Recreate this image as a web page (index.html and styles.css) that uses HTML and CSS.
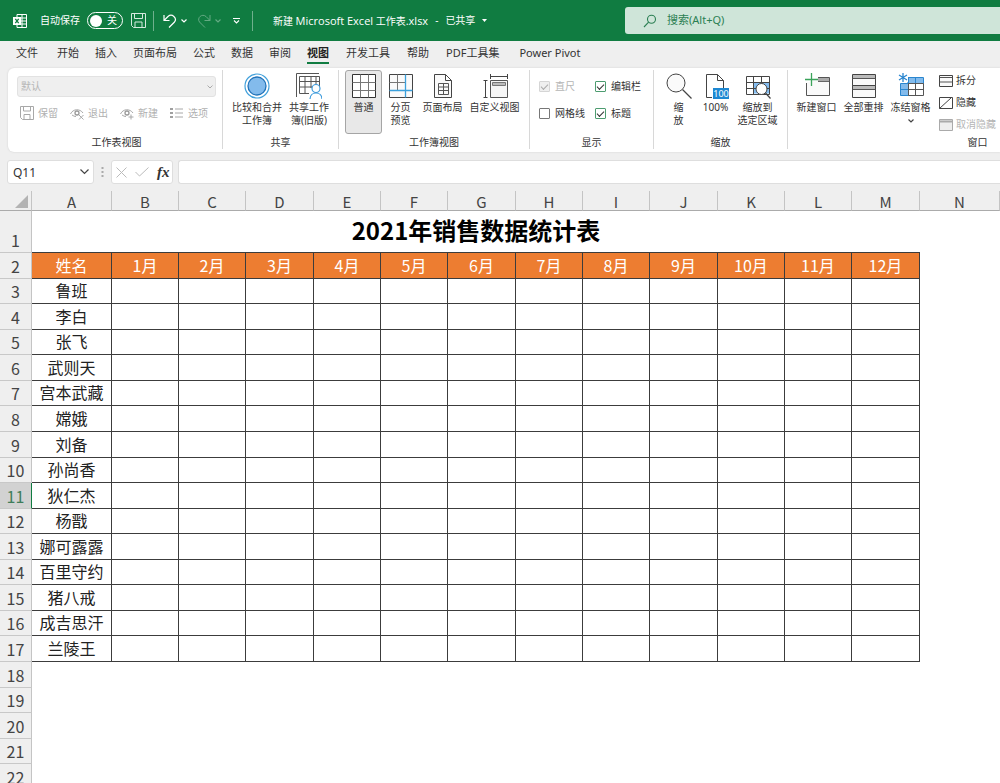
FILE: index.html
```html
<!DOCTYPE html>
<html lang="zh-CN">
<head>
<meta charset="utf-8">
<meta name="viewport" content="width=device-width, initial-scale=1">
<title>新建 Microsoft Excel 工作表.xlsx</title>
<link rel="stylesheet" href="styles.css">
</head>
<body>
<header class="titlebar">
  <div class="titlebar-left">
    <svg class="app-icon" width="14" height="14" viewBox="0 0 14 14" aria-hidden="true"><path d="M4 .5h9.500v13H4zM4 4h9.500M4 7h9.500M4 10h9.500M9 .5v13" fill="none" stroke="#fff"/><path d="M0 3h8v8H0z" fill="#fff"/><path d="M2.300 4.800l3.400 4.400M5.700 4.800L2.300 9.200" stroke="#107c41" stroke-width="1.300"/></svg>
    <label class="autosave" for="autosave">自动保存</label>
    <span class="switch"><input type="checkbox" id="autosave" role="switch"><span class="knob"></span><span>关</span></span>
    <button class="tb-btn save" aria-label="保存"><svg width="15" height="15" viewBox="0 0 15 15"><path d="M.5.5h14v14h-12l-2-2zM3.500.5v5h8v-5M4 14.500V9h7v5.500" fill="none" stroke="#d5eadf"/></svg></button>
    <span class="tb-sep"></span>
    <button class="tb-btn undo" aria-label="撤消"><svg width="14" height="14" viewBox="0 0 14 14"><path d="M1 1v5.500h5.500M1 6.500L5 2.500C9-1 14.500 4 11.500 8L6 13.500" fill="none" stroke="#fff" stroke-width="1.200"/></svg><svg width="6" height="4" viewBox="0 0 6 4"><path d="M.5.5L3 3 5.500.5" fill="none" stroke="#fff" stroke-width="1.200"/></svg></button>
    <button class="tb-btn redo" aria-label="恢复" disabled><svg width="14" height="14" viewBox="0 0 14 14"><path d="M13 1v5.500H7.500M13 6.500L9 2.500C5-1-.5 4 2.500 8L8 13.500" fill="none" stroke="#fff"/></svg><svg width="6" height="4" viewBox="0 0 6 4"><path d="M.5.5L3 3 5.500.5" fill="none" stroke="#fff" stroke-width="1.200"/></svg></button>
    <button class="tb-btn qat" aria-label="自定义快速访问工具栏"><svg width="7" height="6" viewBox="0 0 7 6"><path d="M0 .5h7M1 2.500L3.500 5 6 2.500" fill="none" stroke="#fff" stroke-width="1.100"/></svg></button>
    <span class="tb-sep"></span>
    <button class="doc-title"><span>新建 <span class="latin">Microsoft Excel</span> 工作表<span class="latin">.xlsx</span></span><span>-</span><span>已共享</span><svg width="5" height="3" viewBox="0 0 5 3"><path d="M0 0h5L2.500 3z" fill="#fff"/></svg></button>
  </div>
  <div class="search">
    <svg width="14" height="14" viewBox="0 0 14 14" aria-hidden="true"><circle cx="8.500" cy="5.200" r="4" fill="none" stroke="#2b7f53" stroke-width="1.100"/><path d="M5.600 8.200L1 13" stroke="#2b7f53" stroke-width="1.100"/></svg>
    <input type="text" placeholder="搜索(Alt+Q)" aria-label="搜索">
  </div>
</header>

<nav class="tabs">
  <a href="#">文件</a><a href="#">开始</a><a href="#">插入</a><a href="#">页面布局</a><a href="#">公式</a><a href="#">数据</a><a href="#">审阅</a><a href="#" class="active">视图</a><a href="#">开发工具</a><a href="#">帮助</a><a href="#">PDF工具集</a><a href="#" class="pivot">Power Pivot</a>
</nav>

<section class="ribbon">
  <div class="group g-views">
    <div class="group-body">
      <div class="select-wrap">
        <select disabled aria-label="工作表视图"><option>默认</option></select>
        <svg width="6" height="4" viewBox="0 0 6 4"><path d="M.5.5L3 3 5.500.5" fill="none" stroke="#aaa"/></svg>
      </div>
      <div class="view-actions">
        <button disabled><svg width="14" height="14" viewBox="0 0 14 14"><path d="M.5.5h13v13H2.500l-2-2zM3.500.5v4.500h7V.5M4 13.500V8.500h6v5" fill="none" stroke="#a8a8a8"/></svg>保留</button>
        <button disabled><svg width="14" height="14" viewBox="0 0 14 14"><path d="M.5 8C3 2.500 10 2.500 13 7M2 9c1 1 3 1.500 4 1.500" fill="none" stroke="#a8a8a8"/><circle cx="7" cy="7" r="2" fill="none" stroke="#999" stroke-width="1.300"/><path d="M9 9l4.500 4.500M13.500 9L9 13.500" stroke="#a8a8a8"/></svg>退出</button>
        <button disabled><svg width="14" height="14" viewBox="0 0 14 14"><path d="M.5 8C3 2.500 10 2.500 13 7M2 9c1 1 3 1.500 4 1.500" fill="none" stroke="#a8a8a8"/><circle cx="7" cy="7" r="2" fill="none" stroke="#999" stroke-width="1.300"/><path d="M11 8.500v5M8.500 11h5" stroke="#a8a8a8"/></svg>新建</button>
        <button disabled><svg width="14" height="14" viewBox="0 0 14 14"><path d="M0 3h3M0 7h3M0 11h3" stroke="#a0a0a0" stroke-width="2"/><path d="M5 3h8M5 7h8M5 11h8" stroke="#a8a8a8"/></svg>选项</button>
      </div>
    </div>
    <h2>工作表视图</h2>
  </div>

  <div class="group g-share">
    <div class="group-body big-row">
      <button class="big w-5"><svg width="26" height="26" viewBox="0 0 26 26"><circle cx="13" cy="13" r="12" fill="#fff" stroke="#41a0db" stroke-width="1.200"/><circle cx="13" cy="13" r="9" fill="#83bbec" stroke="#2273b9" stroke-width="1.300"/></svg><span>比较和合并<br>工作簿</span></button>
      <button class="big w-5"><svg width="26" height="26" viewBox="0 0 26 26"><path d="M.5 24V.5H23M3.500 3.500h20V14M3.500 3.500v17H13M3.500 8.500h20M3.500 14H17M9 3.500v17M15 3.500V15M20 3.500v8" fill="none" stroke="#555"/><circle cx="20" cy="15.500" r="4" fill="#fff" stroke="#3d9bdc" stroke-width="1.200"/><path d="M14 26c.5-8 11.500-8 12 0" fill="#fff" stroke="#3d9bdc" stroke-width="1.200"/></svg><span>共享工作<br>簿(旧版)</span></button>
    </div>
    <h2>共享</h2>
  </div>

  <div class="group g-book">
    <div class="group-body big-row">
      <button class="big w-3 pressed" aria-pressed="true"><svg width="26" height="26" viewBox="0 0 26 26"><path d="M1.500 1.500h23v23h-23z" fill="#fff" stroke="#333"/><path d="M1.500 9.500h23M1.500 17.500h23M9.500 1.500v23M17.500 1.500v23" stroke="#777"/></svg><span>普通</span></button>
      <button class="big w-3"><svg width="26" height="26" viewBox="0 0 26 26"><path d="M1.500 1.500h23v23h-23z" fill="#fafafa" stroke="#444"/><path d="M1.500 9.500H17M9.500 1.500V17" stroke="#777"/><path d="M1.500 17.500h23M17.500 1.500v23" stroke="#3ba0dc" stroke-width="1.300"/></svg><span>分页<br>预览</span></button>
      <button class="big w-4"><svg width="26" height="26" viewBox="0 0 26 26"><path d="M4.500 1.500h11l6 6v17h-17zM15.500 1.500v6h6" fill="#fafafa" stroke="#444"/><path d="M8.500 10.500h10v11h-10zM8.500 14h10M8.500 17.500h10M13.500 10.500v11" fill="none" stroke="#555"/></svg><span>页面布局</span></button>
      <button class="big w-5"><svg width="26" height="26" viewBox="0 0 26 26"><path d="M8.500 7.500h17v17h-17z" fill="#f6f6f6" stroke="#555"/><path d="M10.500 9.500h13v3h-13z" fill="#bbb" stroke="#777"/><path d="M8.500 3.500h17M8.500 1v5M25.500 1v5M3.500 7.500v17M1.500 7.500h4M1.500 24.500h4" stroke="#444" fill="none"/></svg><span>自定义视图</span></button>
    </div>
    <h2>工作簿视图</h2>
  </div>

  <div class="group g-show">
    <div class="group-body checks">
      <label class="off"><input type="checkbox" checked disabled>直尺</label>
      <label><input type="checkbox" checked>编辑栏</label>
      <label><input type="checkbox">网格线</label>
      <label><input type="checkbox" checked>标题</label>
    </div>
    <h2>显示</h2>
  </div>

  <div class="group g-zoom">
    <div class="group-body big-row">
      <button class="big w-3"><svg width="26" height="26" viewBox="0 0 26 26"><circle cx="10" cy="10" r="9" fill="#fafafa" stroke="#444"/><path d="M16.500 16.500l9 9" stroke="#444" stroke-width="1.200"/></svg><span>缩<br>放</span></button>
      <button class="big w-3"><svg width="26" height="26" viewBox="0 0 26 26"><path d="M3.500 24.500v-23h11l6 6V16M14.500 1.500v6h6M3.500 24.500H9" fill="none" stroke="#444"/><path d="M10 15h16v11H10z" fill="#1e88d2"/><text x="18" y="24" text-anchor="middle" class="hundred">100</text></svg><span>100%</span></button>
      <button class="big w-4"><svg width="26" height="26" viewBox="0 0 26 26"><path d="M8.500 9.500h16v11h-16z" fill="#85bdf0"/><path d="M1.500 3.500h23v18h-23zM1.500 9.500h23M1.500 15.500h23M8.500 3.500v18M16.500 3.500v18" fill="none" stroke="#444"/><circle cx="16.500" cy="16" r="5.500" fill="#fff" stroke="#444"/><path d="M20.500 20l5 5.500" stroke="#444" stroke-width="1.200"/></svg><span>缩放到<br>选定区域</span></button>
    </div>
    <h2>缩放</h2>
  </div>

  <div class="group g-window">
    <div class="group-body big-row">
      <button class="big w-4"><svg width="26" height="26" viewBox="0 0 26 26"><path d="M2.500 10v12.500h23v-18H14" fill="#fafafa" stroke="#555"/><path d="M14 5h11v3H14z" fill="#aaa"/><path d="M14 8.500h11" stroke="#666"/><path d="M7.500 0v13M1 6.500h13" stroke="#3ba35b" stroke-width="1.300"/></svg><span>新建窗口</span></button>
      <button class="big w-4"><svg width="26" height="26" viewBox="0 0 26 26"><path d="M1.500 1.500h23v11h-23zM1.500 12.500h23v12h-23z" fill="#fafafa" stroke="#444"/><path d="M2 2h22v3H2zM2 13h22v3H2z" fill="#bbb"/><path d="M1.500 5.500h23M1.500 16.500h23" stroke="#555"/></svg><span>全部重排</span></button>
      <button class="big w-4"><svg width="26" height="26" viewBox="0 0 26 26"><path d="M9 4.500h16v6H9zM2.500 10.500h8v12h-8z" fill="#83bbec"/><path d="M10 4.500h15.500v6H2.500v12h8V4.500M2.500 16.500h8M17.500 4.500v6" fill="none" stroke="#2a86cf"/><path d="M10.500 10.500h15v12h-15zM10.500 16.500h15M17.500 10.500v12" fill="none" stroke="#555"/><path d="M0 0h10v9H0z" fill="#fff"/><path d="M5 0v9M1 2l8 5M9 2L1 7" stroke="#2a86cf" stroke-width="1.300"/></svg><span>冻结窗格</span><svg class="drop" width="6" height="4" viewBox="0 0 6 4"><path d="M.5.5L3 3 5.500.5" fill="none" stroke="#444" stroke-width="1.200"/></svg></button>
      <div class="stack">
        <button><svg width="14" height="12" viewBox="0 0 14 12"><path d="M.5.5h13v11H.5z" fill="#fafafa" stroke="#444"/><path d="M.5 2.500h13M.5 7h13" stroke="#555"/></svg>拆分</button>
        <button><svg width="14" height="12" viewBox="0 0 14 12"><path d="M.5.5h13v11H.5zM.5 11.500l12-11" fill="none" stroke="#444"/></svg>隐藏</button>
        <button disabled><svg width="14" height="12" viewBox="0 0 14 12"><path d="M.5.5h13v11H.5z" fill="#eee" stroke="#aaa"/><path d="M.5 2.500h13" stroke="#aaa" stroke-width="2"/></svg>取消隐藏</button>
      </div>
    </div>
    <h2>窗口</h2>
  </div>
</section>

<section class="formula-bar">
  <div class="name-box">
    <input type="text" value="Q11" aria-label="名称框">
    <button aria-label="展开名称框"><svg width="9" height="6" viewBox="0 0 9 6"><path d="M.5.5l4 4 4-4" fill="none" stroke="#444" stroke-width="1.200"/></svg></button>
  </div>
  <svg class="grip" width="3" height="10" viewBox="0 0 3 10" aria-hidden="true"><path d="M.5 0h2v2h-2zM.5 4h2v2h-2zM.5 8h2v2h-2z" fill="#aaa"/></svg>
  <div class="fx-box">
    <button aria-label="取消"><svg width="11" height="11" viewBox="0 0 11 11"><path d="M.5.5l10 10M10.500.5l-10 10" stroke="#bbb"/></svg></button>
    <button aria-label="输入"><svg width="14" height="10" viewBox="0 0 14 10"><path d="M.5 5l4 4 9-8.500" fill="none" stroke="#bbb"/></svg></button>
    <button class="fx" aria-label="插入函数">fx</button>
  </div>
  <input class="formula" type="text" aria-label="编辑栏">
</section>

<main class="sheet">
  <table>
    <colgroup><col class="c-row"><col class="c-a"><col class="c-m"><col class="c-m"><col class="c-n"><col class="c-m"><col class="c-m"><col class="c-n"><col class="c-m"><col class="c-m"><col class="c-n"><col class="c-m"><col class="c-m"><col class="c-n"><col class="c-a"></colgroup>
    <thead>
      <tr><th class="corner"><svg width="13" height="13" viewBox="0 0 13 13" aria-hidden="true"><path d="M13 0v13H0z" fill="#b3b3b3"/></svg></th><th>A</th><th>B</th><th>C</th><th>D</th><th>E</th><th>F</th><th>G</th><th>H</th><th>I</th><th>J</th><th>K</th><th>L</th><th>M</th><th>N</th></tr>
    </thead>
    <tbody>
      <tr class="title-row"><th>1</th><td colspan="13">2021年销售数据统计表</td></tr>
      <tr class="months tall"><th>2</th><td>姓名</td><td>1月</td><td>2月</td><td>3月</td><td>4月</td><td>5月</td><td>6月</td><td>7月</td><td>8月</td><td>9月</td><td>10月</td><td>11月</td><td>12月</td></tr>
      <tr><th>3</th><td>鲁班</td><td></td><td></td><td></td><td></td><td></td><td></td><td></td><td></td><td></td><td></td><td></td><td></td></tr>
      <tr class="tall"><th>4</th><td>李白</td><td></td><td></td><td></td><td></td><td></td><td></td><td></td><td></td><td></td><td></td><td></td><td></td></tr>
      <tr><th>5</th><td>张飞</td><td></td><td></td><td></td><td></td><td></td><td></td><td></td><td></td><td></td><td></td><td></td><td></td></tr>
      <tr class="tall"><th>6</th><td>武则天</td><td></td><td></td><td></td><td></td><td></td><td></td><td></td><td></td><td></td><td></td><td></td><td></td></tr>
      <tr><th>7</th><td>宫本武藏</td><td></td><td></td><td></td><td></td><td></td><td></td><td></td><td></td><td></td><td></td><td></td><td></td></tr>
      <tr class="tall"><th>8</th><td>嫦娥</td><td></td><td></td><td></td><td></td><td></td><td></td><td></td><td></td><td></td><td></td><td></td><td></td></tr>
      <tr class="tall"><th>9</th><td>刘备</td><td></td><td></td><td></td><td></td><td></td><td></td><td></td><td></td><td></td><td></td><td></td><td></td></tr>
      <tr><th>10</th><td>孙尚香</td><td></td><td></td><td></td><td></td><td></td><td></td><td></td><td></td><td></td><td></td><td></td><td></td></tr>
      <tr class="tall current"><th>11</th><td>狄仁杰</td><td></td><td></td><td></td><td></td><td></td><td></td><td></td><td></td><td></td><td></td><td></td><td></td></tr>
      <tr><th>12</th><td>杨戬</td><td></td><td></td><td></td><td></td><td></td><td></td><td></td><td></td><td></td><td></td><td></td><td></td></tr>
      <tr class="tall"><th>13</th><td>娜可露露</td><td></td><td></td><td></td><td></td><td></td><td></td><td></td><td></td><td></td><td></td><td></td><td></td></tr>
      <tr><th>14</th><td>百里守约</td><td></td><td></td><td></td><td></td><td></td><td></td><td></td><td></td><td></td><td></td><td></td><td></td></tr>
      <tr class="tall"><th>15</th><td>猪八戒</td><td></td><td></td><td></td><td></td><td></td><td></td><td></td><td></td><td></td><td></td><td></td><td></td></tr>
      <tr><th>16</th><td>成吉思汗</td><td></td><td></td><td></td><td></td><td></td><td></td><td></td><td></td><td></td><td></td><td></td><td></td></tr>
      <tr class="tall"><th>17</th><td>兰陵王</td><td></td><td></td><td></td><td></td><td></td><td></td><td></td><td></td><td></td><td></td><td></td><td></td></tr>
      <tr class="tall"><th>18</th></tr>
      <tr><th>19</th></tr>
      <tr class="tall"><th>20</th></tr>
      <tr><th>21</th></tr>
      <tr class="tall"><th>22</th></tr>
    </tbody>
  </table>
</main>
</body>
</html>
```
FILE: styles.css
```css
* { box-sizing: border-box; }

body {
  margin: 0;
  height: 100vh;
  display: flex;
  flex-direction: column;
  overflow: hidden;
  background: #efefef;
  color: #333;
  font: 10px/13px "Noto Sans", "Noto Sans CJK SC", sans-serif;
}

button, input, select { font: inherit; color: inherit; }
button { padding: 0; border: 0; background: none; }
svg { display: block; flex: none; }

/* Title bar */
.titlebar {
  flex: none;
  display: grid;
  grid-template-columns: minmax(0, 5fr) minmax(0, 3fr);
  align-items: center;
  height: 41px;
  background: #107c41;
  color: #fff;
}
.titlebar-left {
  display: flex;
  align-items: center;
  padding-left: 13px;
  white-space: nowrap;
}
.autosave { margin: 0 7px 0 13px; }
.switch {
  position: relative;
  display: flex;
  align-items: center;
  justify-content: space-between;
  width: 36px;
  height: 17px;
  padding: 0 5px 0 2px;
  border: 1px solid #fff;
  border-radius: 9px;
}
.switch input { position: absolute; inset: 0; margin: 0; opacity: 0; }
.knob { width: 12px; height: 12px; border-radius: 50%; background: #fff; }
.tb-btn { display: flex; align-items: center; gap: 4px; }
.save { margin: 0 7px 0 8px; }
.tb-sep { width: 1px; height: 20px; background: #6fb08d; }
.undo { margin: 0 10px 0 9px; }
.redo { opacity: .35; }
.qat { margin: 0 12px; }
.doc-title { display: flex; align-items: center; gap: 7px; margin-left: 20px; white-space: nowrap; }
.latin { font-family: "Open Sans", "Noto Sans", sans-serif; font-size: 11px; }
.search {
  display: flex;
  align-items: center;
  gap: 10px;
  height: 27px;
  padding-left: 18px;
  border-radius: 3px 0 0 3px;
  background: #cfe5d9;
}
.search input {
  flex: 1;
  min-width: 0;
  padding: 0 0 2px;
  border: 0;
  background: none;
  font-size: 11px;
}
.search input::placeholder { color: #2b7f53; }

/* Tabs */
.tabs {
  flex: none;
  display: flex;
  gap: 16px;
  height: 27px;
  padding: 4px 16px 0;
  font-size: 11px;
  line-height: 16px;
  white-space: nowrap;
}
.tabs a { height: 19px; color: #333; text-decoration: none; }
.tabs a:first-child { margin-right: 3px; }
.tabs .active { border-bottom: 2px solid #107c41; font-weight: bold; color: #222; }
.tabs .active ~ a { margin-left: 1px; }
.tabs a.pivot { margin-left: 4px; }

/* Ribbon */
.ribbon {
  flex: none;
  display: flex;
  height: 84px;
  margin-left: 8px;
  padding: 2px 0 3px;
  border-radius: 6px 0 0 6px;
  background: #fff;
  box-shadow: 0 0 2px #ccc;
  overflow: hidden;
}
.group {
  flex: none;
  display: flex;
  flex-direction: column;
  border-right: 1px solid #d8d8d8;
  white-space: nowrap;
}
.group h2 {
  margin: 0;
  font-size: 10px;
  font-weight: normal;
  text-align: center;
}
.group-body { flex: 1; }
.g-views { width: 215px; padding: 0 6px 0 9px; }
.g-share { width: 116px; }
.g-book { width: 191px; }
.g-show { width: 124px; }
.g-zoom { width: 134px; }
.g-window { width: 380px; }

.select-wrap { position: relative; margin-top: 6px; }
.select-wrap select {
  display: block;
  width: 100%;
  height: 21px;
  padding: 0 3px;
  border: 1px solid #e2e2e2;
  border-radius: 3px;
  background: #efefef;
  color: #b5b5b5;
  appearance: none;
  opacity: 1;
}
.select-wrap svg { position: absolute; right: 3px; top: 9px; }
.view-actions { display: flex; justify-content: space-between; padding: 9px 8px 0 3px; }
.view-actions button { display: flex; align-items: center; gap: 4px; color: #b0b0b0; }

.big-row { display: flex; align-items: flex-start; }
.big {
  display: flex;
  flex-direction: column;
  align-items: center;
  height: 64px;
  padding-top: 2px;
  border: 1px solid transparent;
  border-radius: 3px;
}
.big span { margin-top: 2px; }
.w-3 { width: 37px; }
.w-4 { width: 47px; }
.w-5 { width: 52px; }
.pressed { border-color: #a5a5a5; background: #e8e8e8; }
.drop { margin-top: 5px; }
.g-share .big-row { padding-left: 8px; }
.g-book .big-row { padding-left: 6px; }
.g-book .w-5 { width: 57px; }
.g-zoom .big-row { padding-left: 6px; }
.g-window .big-row { padding-left: 5px; }

.checks {
  display: grid;
  grid-template-columns: 56px auto;
  grid-auto-rows: 27px;
  padding: 3px 0 0 9px;
}
.checks label { display: flex; align-items: center; gap: 5px; }
.checks .off { color: #b5b5b5; }
.checks input {
  display: grid;
  place-items: center;
  width: 11px;
  height: 11px;
  margin: 0;
  border: 1px solid #777;
  border-radius: 1px;
  background: #fff;
  appearance: none;
}
.checks input:checked { border-color: #4d9c70; }
.checks input:checked::before {
  content: "";
  width: 6px;
  height: 3px;
  margin-bottom: 2px;
  border: solid #333;
  border-width: 0 0 1px 1px;
  rotate: -45deg;
}
.checks input:disabled { border-color: #d5d5d5; background: #efefef; }
.checks input:disabled::before { border-color: #aaa; }
.hundred { fill: #fff; font-size: 9px; }

.stack { display: flex; flex-direction: column; gap: 9px; padding: 4px 0 0 5px; }
.stack button { display: flex; align-items: center; gap: 3px; }
.stack button:disabled { color: #b5b5b5; }

/* Formula bar */
.formula-bar {
  flex: none;
  display: flex;
  align-items: center;
  height: 24px;
  margin-top: 8px;
  padding-left: 7px;
}
.name-box, .fx-box, .formula {
  height: 24px;
  border: 1px solid #dedede;
  border-radius: 3px;
  background: #fff;
}
.name-box { display: flex; align-items: center; width: 87px; padding: 0 4px 0 5px; }
.name-box input { flex: 1; min-width: 0; padding: 0; border: 0; font-size: 12px; }
.grip { margin: 0 7px; }
.fx-box { display: flex; align-items: center; gap: 8px; width: 62px; padding: 0 4px; }
.fx { font: italic bold 15px/16px "Liberation Serif", serif; }
.formula { flex: 1; min-width: 0; margin-left: 5px; border-right: 0; border-radius: 3px 0 0 3px; }

/* Worksheet */
.sheet {
  flex: 1;
  min-height: 0;
  margin-top: 7px;
  overflow: hidden;
  background: linear-gradient(#efefef 19px, #ababab 19px, #ababab 20px, #fff 20px);
}
table { width: max-content; border-spacing: 0; color: #222; font-size: 16px; line-height: 20px; font-family: "Noto Sans CJK SC", sans-serif; }
.c-row { width: 32px; }
.c-a { width: 80px; }
.c-m { width: 67px; }
.c-n { width: 68px; }
th, td { padding: 0; text-align: center; white-space: nowrap; }
th { background: #efefef; color: #444; font-weight: normal; }
thead th {
  height: 20px;
  padding-top: 2px;
  border-right: 1px solid #c4c4c4;
  border-bottom: 1px solid #ababab;
  font-size: 15px;
  line-height: 17px;
}
.corner svg { margin-left: 15px; }
tbody tr { height: 25px; }
tbody tr.tall { height: 26px; }
tbody th { padding-bottom: 2px; border-right: 1px solid #c4c4c4; border-bottom: 1px solid #c8c8c8; vertical-align: bottom; }
tbody td { padding-bottom: 2px; border-right: 1px solid #3c3c3c; border-bottom: 1px solid #3c3c3c; background: #fff; }
tbody tr.title-row { height: 42px; }
.title-row td { padding-bottom: 4px; border-right: 0; color: #000; font-size: 24px; font-weight: bold; line-height: 32px; }
.months td { background: #ed7d31; color: #fff; }
.current th { border-right-color: #107c41; background: #d2d2d2; color: #3f7d5a; }
```
